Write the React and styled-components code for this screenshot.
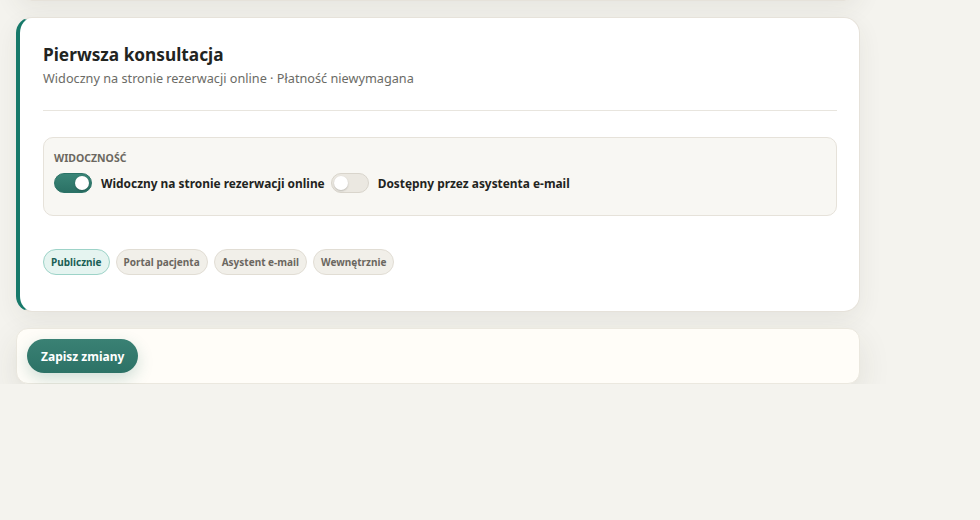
import styled, { createGlobalStyle } from "styled-components";
import { useState } from "react";

const GlobalStyle = createGlobalStyle`
    html, body {
        margin: 0;
        padding: 0;
        background: #f4f3ee;
        font-family: "Noto Sans", "Open Sans", sans-serif;
        color: #1f2421;
    }
`;

const Page = styled.div`
    width: 844px;
    padding: 0 16px;
    display: flex;
    flex-direction: column;
    gap: 16px;
`;

// card scrolled off above the viewport
const PrevCard = styled.div`
    height: 80px;
    margin-top: -81px;
    background: #fff;
    border: 1px solid #e6e2da;
    border-radius: 16px;
    box-shadow: 0 8px 24px rgba(60, 55, 40, 0.07);
`;

const Card = styled.section`
    background: #fff;
    border: 1px solid #e6e2da;
    border-left: 4px solid #17796a;
    border-radius: 16px;
    padding: 25px 22px 36px 23px;
    box-shadow: 0 8px 24px rgba(60, 55, 40, 0.07);
`;

const Header = styled.header`
    padding-bottom: 23px;
    border-bottom: 1px solid #e8e5de;
`;

const Title = styled.h2`
    margin: 0;
    font-size: 17.25px;
    line-height: 23px;
    font-weight: 700;
    color: #22241f;
`;

const Subtitle = styled.p`
    margin: 3px 0 0;
    font-size: 12.7px;
    line-height: 18px;
    color: #6b6b66;
`;

const Panel = styled.div`
    margin-top: 26px;
    background: #f8f7f3;
    border: 1px solid #e6e2da;
    border-radius: 10px;
    padding: 12px 10px 22px;
`;

const PanelLabel = styled.div`
    font-size: 10.5px;
    line-height: 16px;
    font-weight: 700;
    color: #6b6760;
    text-transform: uppercase;
`;

const ToggleRow = styled.div`
    margin-top: 7px;
    display: flex;
    align-items: center;
    gap: 6px;
`;

const ToggleLabel = styled.label`
    display: flex;
    align-items: center;
    gap: 9px;
    font-size: 11.9px;
    font-weight: 700;
    color: #1f2421;
    cursor: pointer;
`;

const Track = styled.button`
    position: relative;
    box-sizing: border-box;
    width: 38px;
    height: 20px;
    padding: 0;
    border-radius: 10px;
    border: 1px solid ${p => p.on ? "#2b7367" : "#d9d5cc"};
    background: ${p => p.on ? "linear-gradient(180deg, #3a8577, #2b7165)" : "#ebe8e1"};
    cursor: pointer;
    &::after {
        content: "";
        position: absolute;
        top: 2px;
        left: ${p => p.on ? "20px" : "2px"};
        width: 14px;
        height: 14px;
        border-radius: 50%;
        background: #fff;
        box-shadow: 0 1px 2px rgba(0, 0, 0, 0.2);
    }
`;

const Chips = styled.div`
    margin-top: 33px;
    display: flex;
    gap: 6px;
`;

const Chip = styled.span`
    display: inline-flex;
    align-items: center;
    height: 24px;
    padding: 0 7px;
    border-radius: 13px;
    font-size: 10px;
    font-weight: 700;
    border: 1px solid ${p => p.active ? "#9dd3c8" : "#e1ddd4"};
    background: ${p => p.active ? "#e5f4f0" : "#f1efe9"};
    color: ${p => p.active ? "#1b5f55" : "#6b6760"};
`;

const Footer = styled.div`
    background: #fffdf8;
    border: 1px solid #ebe8df;
    border-radius: 12px;
    padding: 10px;
    box-shadow: 0 12px 32px rgba(60, 55, 40, 0.1);
`;

const SaveButton = styled.button`
    height: 34px;
    padding: 0 14px;
    border: none;
    border-radius: 17px;
    background: linear-gradient(180deg, #3a8174, #2c7266);
    color: #fff;
    font-family: inherit;
    font-size: 12px;
    font-weight: 700;
    box-shadow: 0 6px 16px rgba(43, 114, 101, 0.22);
    cursor: pointer;
`;

function Toggle({ on, onChange, children }) {
    return (
        <ToggleLabel>
            <Track type="button" on={on ? 1 : 0} onClick={() => onChange(!on)} />
            {children}
        </ToggleLabel>
    );
}

export default function App() {
    const [online, setOnline] = useState(true);
    const [email, setEmail] = useState(false);
    const chips = ["Publicznie", "Portal pacjenta", "Asystent e-mail", "Wewnętrznie"];

    return (
        <>
            <GlobalStyle />
            <Page>
                <PrevCard />
                <Card>
                    <Header>
                        <Title>Pierwsza konsultacja</Title>
                        <Subtitle>Widoczny na stronie rezerwacji online · Płatność niewymagana</Subtitle>
                    </Header>
                    <Panel>
                        <PanelLabel>Widoczność</PanelLabel>
                        <ToggleRow>
                            <Toggle on={online} onChange={setOnline}>Widoczny na stronie rezerwacji online</Toggle>
                            <Toggle on={email} onChange={setEmail}>Dostępny przez asystenta e-mail</Toggle>
                        </ToggleRow>
                    </Panel>
                    <Chips>
                        {chips.map((c, i) => <Chip key={c} active={i === 0}>{c}</Chip>)}
                    </Chips>
                </Card>
                <Footer>
                    <SaveButton>Zapisz zmiany</SaveButton>
                </Footer>
            </Page>
        </>
    );
}
